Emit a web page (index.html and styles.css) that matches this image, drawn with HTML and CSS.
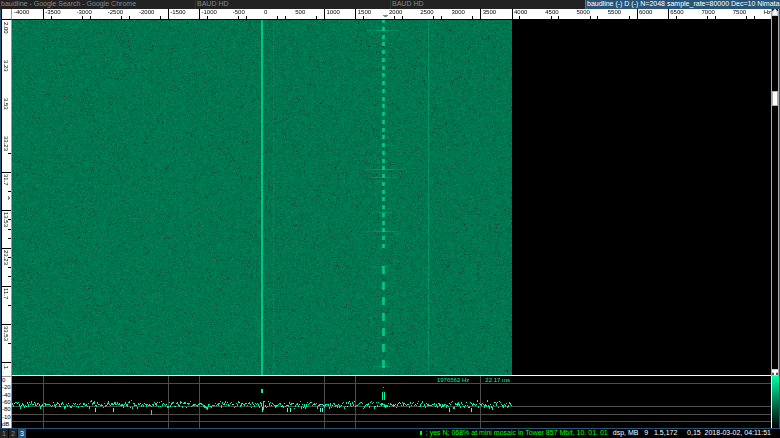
FILE: index.html
```html
<!DOCTYPE html>
<html lang="en">
<head>
<meta charset="utf-8">
<title>baudline</title>
<link rel="stylesheet" href="styles.css">
</head>
<body>
<header class="tabs">
  <span class="tab">baudline - Google Search - Google Chrome</span>
  <span class="tab">BAUD HD</span>
  <span class="tab">BAUD HD</span>
  <span class="tab active">baudline (-) D (-) N=2048 sample_rate=80000 Dec=10 Nimatau</span>
</header>
<main class="window">
  <div class="corner"></div>
  <div class="ruler">
    <canvas id="xticks"></canvas>
    <div class="scale" id="xlabels"></div>
  </div>
  <div class="scroll">
    <svg class="arrow" viewBox="0 0 6 7"><path fill="#ccc" d="M0 0h6v7H0z"/><path fill="#fff" d="M2 1h2v2h1v3H1V3h1z"/><path fill="#222" d="M0 0h2v1H1v1H0zM4 0h2v2H5V1H4z"/></svg>
    <div class="thumb"></div>
    <svg class="arrow" viewBox="0 0 6 7"><path fill="#ccc" d="M0 0h6v7H0z"/><path fill="#fff" d="M0 1h6v2H4v3H2V3H0z"/><path fill="#555" d="M0 4h2v2H0zM4 4h2v2H4z"/></svg>
  </div>
  <div class="times">
    <canvas id="yticks"></canvas>
    <div class="time-labels"><span>2.00</span><span>3.23</span><span>3.53</span><span>33.23</span><span>31.7</span><span>13.53</span><span>23.23</span><span>11.7</span><span>33.53</span><span>.1</span></div>
  </div>
  <div class="waterfall"><canvas id="waterfall"></canvas></div>
  <div class="levels"><span>0</span><span>-20</span><span>-40</span><span>-60</span><span>-80</span><span>-100</span><span>dB</span></div>
  <div class="spectrum">
    <canvas id="spectrum"></canvas>
    <div class="readout"><span>1976562 Hz</span><span>22.17 ms</span></div>
  </div>
  <div class="gradient"></div>
</main>
<footer class="status">
  <nav class="spaces"><button>1</button><button>2</button><button class="current">3</button></nav>
  <p class="info"><span class="ok"><i class="block"></i>&nbsp; ; yes N; 068% at mini mosaic in Tower 857 Mbit, 10. 01. 01</span><span>dsp, MB &nbsp; 9 &nbsp; 1.5,172 &nbsp; &nbsp; 0,15 &nbsp;2018-03-02, 04:11:51</span></p>
</footer>
<script src="plot.js"></script>
</body>
</html>
```
FILE: styles.css
```css
* { box-sizing: border-box; }
body {
  margin: 0;
  height: 100vh;
  display: flex;
  flex-direction: column;
  background: #000;
  color: #fff;
  font: 7px/8px "Liberation Sans", sans-serif;
}
canvas { position: absolute; left: 0; top: 0; width: 100%; height: 100%; }
.tabs {
  display: grid;
  grid-template-columns: repeat(4, minmax(0, 1fr));
  height: 9px;
  flex: none;
  background: #222;
  color: #888;
}
.tab { padding-left: 1px; white-space: nowrap; overflow: hidden; border-left: 1px solid #333; }
.tab:first-child { border-left: 0; }
.active { background: #285577; border-left: 1px solid #4c7899; color: #fff; }
.window {
  flex: 1;
  min-height: 0;
  display: grid;
  grid-template: 11px minmax(0, 1fr) 52px / 11px minmax(0, 1fr) 8px;
  border: 1px solid #285577;
  border-top: 0;
}
.corner { background: #fff; border-right: 1px solid #999; border-bottom: 1px solid #000; margin-left: 1px; }
.ruler { position: relative; background: #fff; color: #000; border-bottom: 1px solid #000; }
.scale {
  position: relative;
  display: grid;
  grid-template-columns: repeat(24, minmax(0, 1fr)) 9px;
  font: 6px/6px "Liberation Sans", sans-serif;
}
.scale span { padding-left: 2px; white-space: nowrap; }
.scale span:last-child { padding: 0; justify-self: end; }
.scroll {
  grid-column: 3;
  grid-row: 1 / 3;
  display: flex;
  flex-direction: column;
  background: #000;
  border: solid #aaa;
  border-width: 0 1px;
}
.arrow { width: 6px; height: 7px; flex: none; }
.thumb { height: 15px; margin: 75px 0 auto; background: #fff; border: 1px solid #aaa; }
.times { position: relative; background: #fff; color: #000; margin-left: 1px; border-right: 1px solid #999; }
.time-labels {
  position: relative;
  height: 100%;
  display: flex;
  flex-direction: column;
  overflow: hidden;
  padding-left: 1px;
  font: 6px/6px "Liberation Sans", sans-serif;
}
.time-labels span { writing-mode: vertical-rl; width: 6px; height: 38px; flex: none; padding-top: 2px; }
.waterfall { position: relative; border-bottom: 1px solid #fff; }
.waterfall canvas { width: calc((100% - 9px) * 2 / 3); }
.levels {
  display: flex;
  flex-direction: column;
  justify-content: space-between;
  margin-left: 1px;
  overflow: hidden;
  background: #fff;
  color: #000;
  border-top: 1px solid #999;
  border-right: 1px solid #999;
  font: 6px/7px "Liberation Sans", sans-serif;
}
.spectrum { position: relative; }
.readout {
  position: relative;
  display: flex;
  justify-content: flex-end;
  gap: 16px;
  width: calc((100% - 9px) * 2 / 3);
  padding-right: 2px;
  font-size: 6px;
  color: #00ffa6;
}
.gradient { border-left: 1px solid #fff; background: linear-gradient(#00ffaa, #006e4a 55%, #000); }
.status { display: flex; justify-content: space-between; height: 9px; flex: none; }
.spaces { display: flex; }
.spaces button {
  width: 8px;
  margin: 0 1px 0 0;
  padding: 0;
  border: 0;
  background: #222;
  color: #888;
  font: inherit;
}
.spaces .current { background: #285577; color: #fff; }
.info { display: flex; gap: 5px; margin: 0 9px 0 0; white-space: nowrap; }
.ok { color: #00ff00; }
.block { display: inline-block; width: 2px; height: 4px; background: #00ff00; }
```
FILE: plot.js
```js
// Small seeded generator so every redraw shows the same noise.
function generator(seed) {
  let s = seed;
  return () => {
    s = (s + 0x6d2b79f5) | 0;
    let t = Math.imul(s ^ (s >>> 15), 1 | s);
    t = (t + Math.imul(t ^ (t >>> 7), 61 | t)) ^ t;
    return ((t ^ (t >>> 14)) >>> 0) / 4294967296;
  };
}

function surface(id) {
  const c = document.getElementById(id);
  c.width = c.clientWidth;
  c.height = c.clientHeight;
  return { g: c.getContext('2d'), w: c.width, h: c.height };
}

function labels() {
  const box = document.getElementById('xlabels');
  for (let f = -4000; f <= 8000; f += 500) {
    const s = document.createElement('span');
    s.textContent = f === 8000 ? 'Hz' : f;
    box.append(s);
  }
}

// Steps of 500 Hz whose grid lines are drawn at full strength.
const MAJOR = [1, 5, 6, 10, 11, 15, 16, 20, 21];

function xticks() {
  const { g, w, h } = surface('xticks');
  const step = (w - 9) / 24;
  g.fillStyle = '#000';
  for (const i of MAJOR) g.fillRect(Math.floor(i * step), 0, 1, h);
  for (let i = 1; i < 24; i += 1.25) {
    g.fillRect(Math.floor(i * step), h - 3, 1, 3);
    g.fillRect(Math.floor((i + 0.25) * step), h - 3, 1, 3);
  }
  g.fillStyle = '#888';
  g.fillRect(371, h - 4, 5, 1);
  g.fillRect(372, h - 3, 3, 1);
}

function yticks() {
  const { g, w, h } = surface('yticks');
  g.fillStyle = '#000';
  for (let y = 152; y < h; y += 38) g.fillRect(0, y, w, 1);
  for (const y of [133, 171, 199, 209, 218, 237, 247, 256, 285, 323]) g.fillRect(w - 3, y, 3, 1);
  g.fillStyle = '#888';
  g.fillRect(w - 3, 176, 1, 4);
  g.fillRect(w - 2, 177, 1, 2);
}

function waterfall() {
  const { g, w, h } = surface('waterfall');
  const rnd = generator(7);
  const img = g.createImageData(w, h);
  for (let i = 0; i < w * h; i++) {
    const r = rnd();
    let v = 118 + (rnd() + rnd() - 1) * 20;
    if (r < 0.08) v -= 18;
    if (r < 0.006) v -= 40;
    img.data[i * 4] = 0;
    img.data[i * 4 + 1] = v;
    img.data[i * 4 + 2] = v * 0.68;
    img.data[i * 4 + 3] = 255;
  }
  g.putImageData(img, 0, 0);
  const line = (x, y, lw, lh, a) => {
    g.fillStyle = `rgba(0,210,140,${a})`;
    g.fillRect(x, y, lw, lh);
  };
  line(249, 0, 2, h, 0.85);
  line(261, 0, 1, h, 0.15);
  line(416, 0, 1, h, 0.3);
  line(168, 0, 1, h, 0.06);
  const dash = (y, len) => {
    line(370, y, 3, len, 0.75);
    line(371, y, 1, len, 0.6);
  };
  for (let i = 0; i < 30; i++) dash(Math.round(i * 7.75 - 1), 4);
  for (let y = 246; y < h; y += 15.6) dash(Math.round(y), 8);
  for (const [y, half] of [[10, 16], [149, 20], [157, 14], [192, 9], [211, 16], [246, 8], [346, 10]]) {
    line(371 - half, y, half * 2, 1, 0.2);
    line(371 - half / 2, y, half, 1, 0.2);
  }
}

function spectrum() {
  const { g, w } = surface('spectrum');
  const rnd = generator(21);
  const step = (w - 9) / 24;
  g.fillStyle = '#4d4d4d';
  for (const y of [7, 30, 38, 45]) g.fillRect(0, y, w, 1);
  for (const i of MAJOR.slice(0, 6)) g.fillRect(Math.floor(i * step), 0, 1, 52);
  const end = Math.round(step * 16);
  for (let x = 0; x < end; x++) {
    const r = rnd();
    const y = 28 + Math.round((rnd() + rnd() - 1) * 4);
    g.fillStyle = r > 0.85 ? '#4dffd0' : '#00f5a0';
    g.fillRect(x, y, 1, r < 0.12 ? 3 : r < 0.45 ? 2 : 1);
    if (r > 0.982) g.fillRect(x, 32, 1, 4);
  }
  g.fillStyle = '#00f5a0';
  g.fillRect(139, 34, 1, 5);
  g.fillRect(249, 13, 2, 4);
  g.fillRect(251, 25, 1, 9);
  g.fillRect(371, 11, 1, 1);
  g.fillRect(370, 16, 1, 8);
  g.fillRect(372, 16, 1, 8);
}

function draw() {
  xticks();
  yticks();
  waterfall();
  spectrum();
}

labels();
draw();
window.addEventListener('resize', draw);
```
